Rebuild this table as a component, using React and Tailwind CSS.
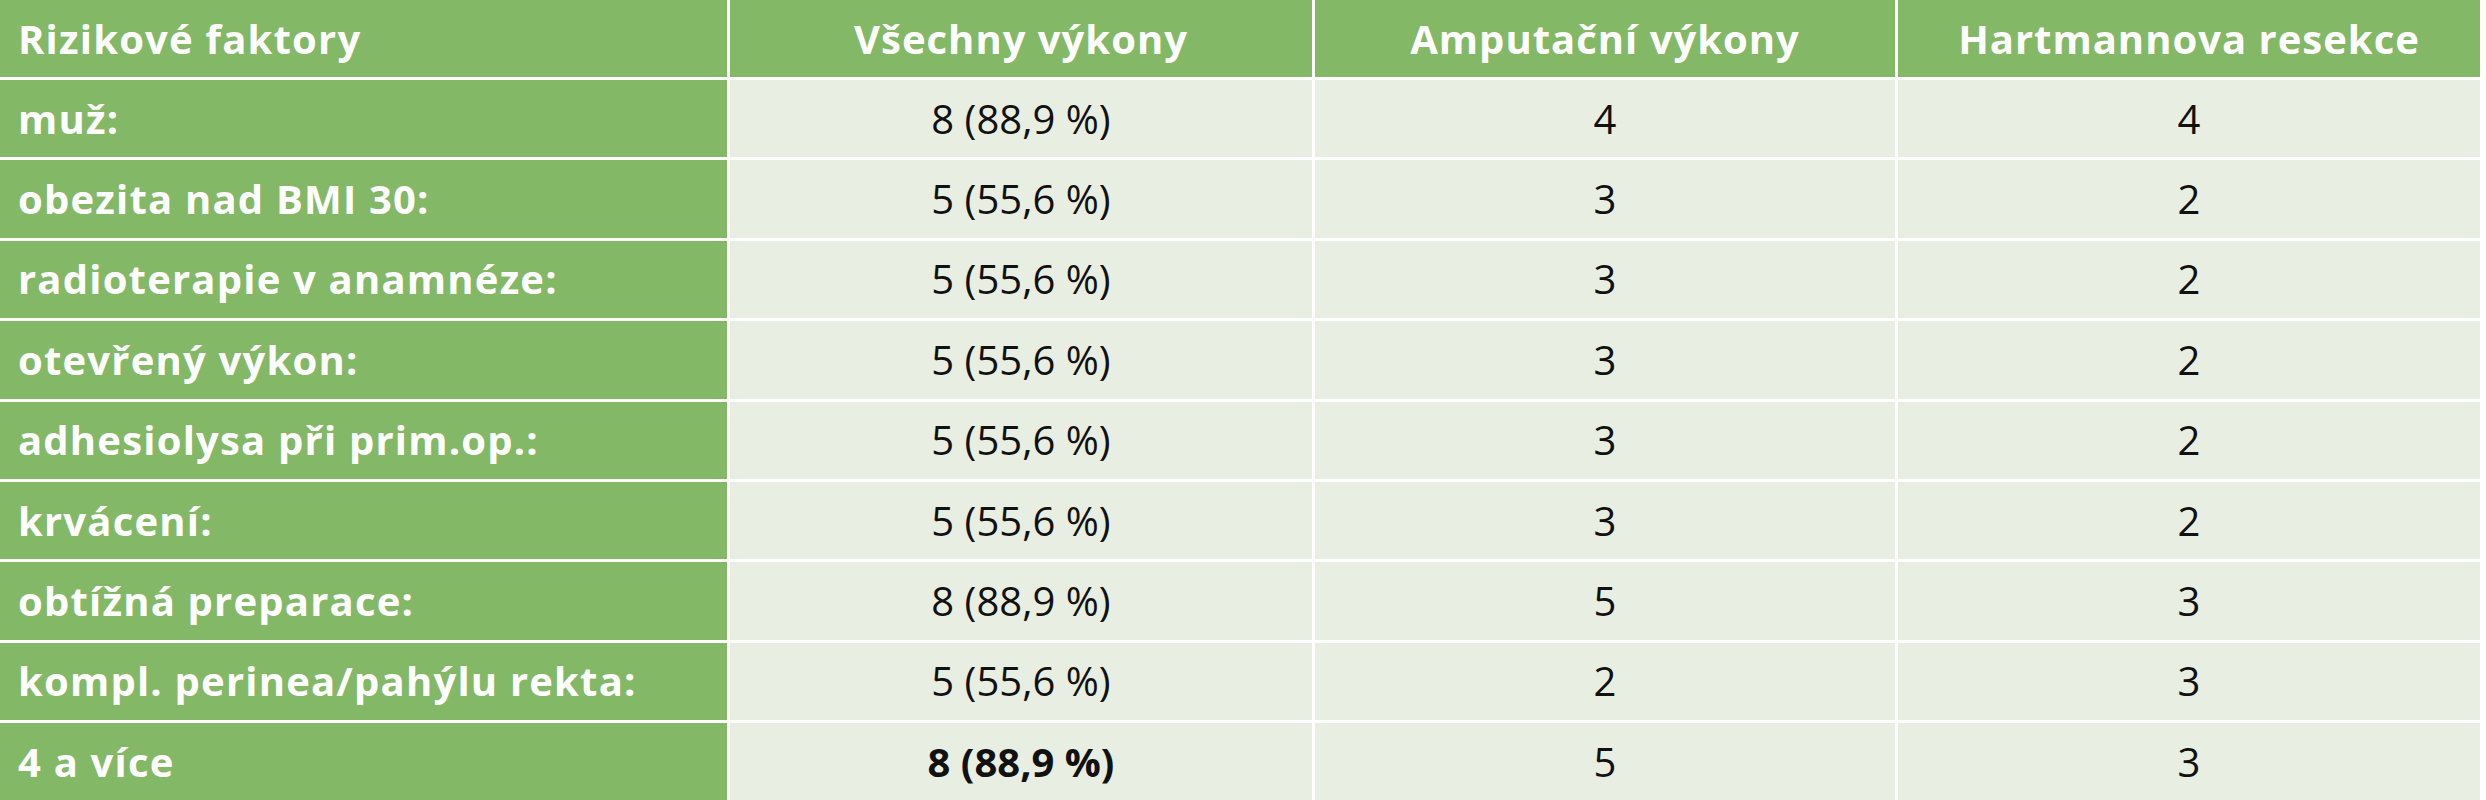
import React from "react";

const rows = [
  ["muž:", "8 (88,9 %)", "4", "4"],
  ["obezita nad BMI 30:", "5 (55,6 %)", "3", "2"],
  ["radioterapie v anamnéze:", "5 (55,6 %)", "3", "2"],
  ["otevřený výkon:", "5 (55,6 %)", "3", "2"],
  ["adhesiolysa při prim.op.:", "5 (55,6 %)", "3", "2"],
  ["krvácení:", "5 (55,6 %)", "3", "2"],
  ["obtížná preparace:", "8 (88,9 %)", "5", "3"],
  ["kompl. perinea/pahýlu rekta:", "5 (55,6 %)", "2", "3"],
  ["4 a více", "8 (88,9 %)", "5", "3"],
];

const font = { fontFamily: '"Open Sans", "Noto Sans", sans-serif' };

export default function App() {
  return (
    <div className="w-[2486px] h-[800px] bg-white overflow-hidden" style={font}>
      <div className="w-[2480px] grid grid-cols-[727px_582px_580px_582px] grid-rows-[77px_repeat(9,77.4px)] gap-[3px] bg-white">
        <div className="bg-[#83b866] flex items-center pl-[18px] text-white font-bold text-[40px] tracking-[1.2px]">Rizikové faktory</div>
        <div className="bg-[#83b866] flex items-center justify-center text-white font-bold text-[40px] tracking-[1px]">Všechny výkony</div>
        <div className="bg-[#83b866] flex items-center justify-center text-white font-bold text-[40px] tracking-[1px]">Amputační výkony</div>
        <div className="bg-[#83b866] flex items-center justify-center text-white font-bold text-[40px] tracking-[1px]">Hartmannova resekce</div>
        {rows.map((r, i) => (
          <React.Fragment key={i}>
            <div className="bg-[#83b866] flex items-center pl-[18px] text-white font-bold text-[40px] tracking-[1.2px]">{r[0]}</div>
            <div className={"bg-[#e9eee2] flex items-center justify-center text-[#111] text-[40px] " + (i === 8 ? "font-bold" : "font-normal")}>{r[1]}</div>
            <div className="bg-[#e9eee2] flex items-center justify-center text-[#111] text-[40px]">{r[2]}</div>
            <div className="bg-[#e9eee2] flex items-center justify-center text-[#111] text-[40px]">{r[3]}</div>
          </React.Fragment>
        ))}
      </div>
    </div>
  );
}
